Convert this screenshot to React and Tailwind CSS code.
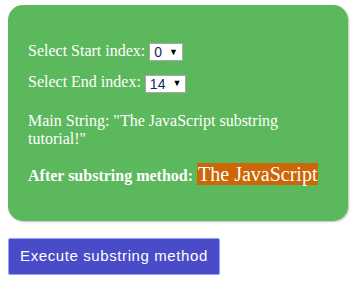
import { useState } from 'react'

const Picker = ({ value }) => {
  return (
    <span className="inline-flex items-center gap-[7px] h-[18px] pl-[4px] pr-[4px] bg-white border border-[#a9a9a9] align-middle text-black text-[14px] leading-none" style={{ fontFamily: '"Liberation Sans", Arial, sans-serif' }}>
      <span className="text-[#1f1f5f]">{value}</span>
      <span className="text-[9px]">▼</span>
    </span>
  )
}

const App = () => {
  const [start] = useState(0)
  const [end] = useState(14)
  const text = 'The JavaScript substring tutorial!'

  return (
    <div className="bg-white w-[356px] h-[283px] pt-[5px] px-[8px]">
      <div className="bg-[#5cb85c] rounded-[15px] h-[216px] px-[20px] pt-[37px] text-white text-[16px] leading-[18px] shadow-[1px_1px_2px_rgba(0,0,0,0.25)]" style={{ fontFamily: '"Liberation Serif", "Times New Roman", serif' }}>
        <p className="mb-[12px]">
          Select Start index: <Picker value={start} />
        </p>
        <p className="mb-[19px]">
          Select End index: <Picker value={end} />
        </p>
        <p className="mb-[15px] leading-[18px]">
          Main String: "{text}"
        </p>
        <p>
          <b>After substring method:</b>{' '}
          <span className="bg-[#cc6606] text-[20px] leading-[22px] px-[1px]">{text.substring(start, end)}</span>
        </p>
      </div>
      <button className="mt-[17px] w-[212px] h-[37px] bg-[#4a4bc8] border border-[#8fa3ff] rounded-[2px] text-white text-[15px] tracking-[0.6px]" style={{ fontFamily: '"Liberation Sans", Arial, sans-serif' }}>
        Execute substring method
      </button>
    </div>
  )
}

export default App
